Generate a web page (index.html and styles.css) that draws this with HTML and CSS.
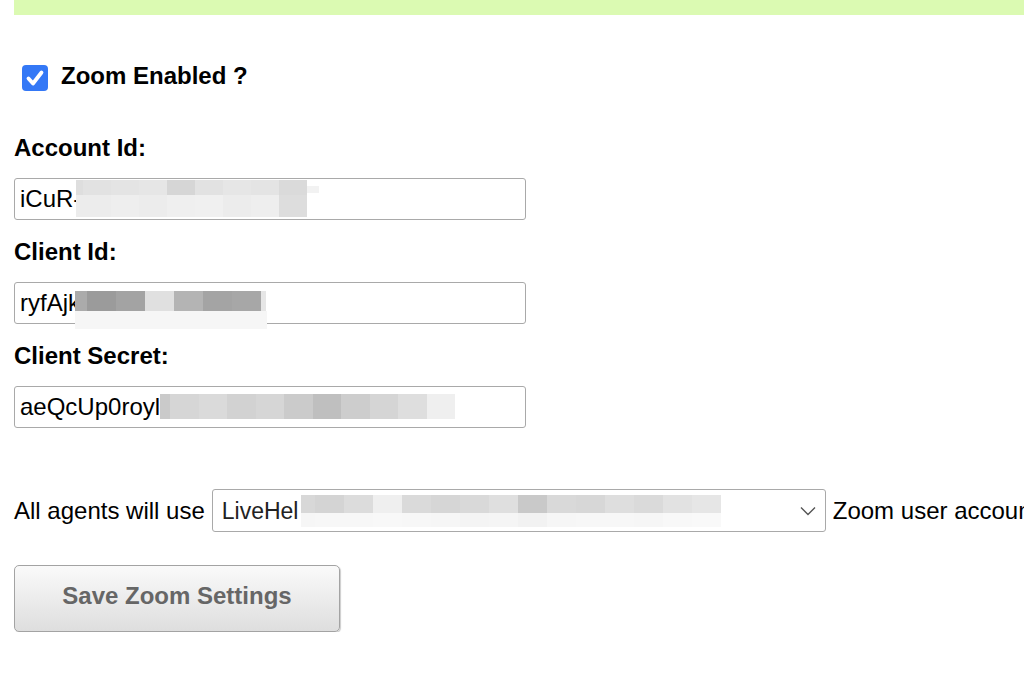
FILE: index.html
```html
<!DOCTYPE html>
<html>
<head>
<meta charset="utf-8">
<link rel="stylesheet" href="styles.css">
</head>
<body>
<div class="page">
  <div class="notice"></div>

  <label class="enable">
    <span class="check">
      <svg width="26" height="26" viewBox="0 0 26 26"><path d="M6.5 13.5 L11 18.5 L19.5 7.5" fill="none" stroke="#fff" stroke-width="3.8" stroke-linecap="round" stroke-linejoin="round"/></svg>
    </span>
    <span class="enable-text">Zoom Enabled ?</span>
  </label>

  <div class="field">
    <div class="label">Account Id:</div>
    <div class="input-wrap">
      <div class="input">iCuR-</div>
      <div class="blur blur-account">
        <div class="brow"><i style="width:7px;background:#dedede"></i><i style="background:#e2e2e2"></i><i style="background:#e4e4e4"></i><i style="background:#e6e6e6"></i><i style="background:#d6d6d6"></i><i style="background:#e2e2e2"></i><i style="background:#e6e6e6"></i><i style="background:#e4e4e4"></i><i style="background:#dadada"></i><i style="width:12px;height:7px;margin-top:6px;background:#f2f2f2"></i></div>
        <div class="brow"><i style="width:7px;background:#ececec"></i><i style="background:#ececec"></i><i style="background:#eeeeee"></i><i style="background:#ececec"></i><i style="background:#efefef"></i><i style="background:#f0f0f0"></i><i style="background:#ececec"></i><i style="background:#eeeeee"></i><i style="background:#dddddd"></i></div>
      </div>
    </div>
  </div>

  <div class="field">
    <div class="label">Client Id:</div>
    <div class="input-wrap">
      <div class="input">ryfAjk</div>
      <div class="blur blur-client">
        <div class="brow top"><i style="width:12px;background:#ababab"></i><i style="background:#9b9b9b"></i><i style="background:#a3a3a3"></i><i style="background:#e0e0e0"></i><i style="background:#b4b4b4"></i><i style="background:#a4a4a4"></i><i style="background:#a7a7a7"></i><i style="width:5px;background:#e6e6e6"></i></div>
        <div class="brow"><i style="width:192px;background:#f6f6f6"></i></div>
      </div>
    </div>
  </div>

  <div class="field">
    <div class="label">Client Secret:</div>
    <div class="input-wrap">
      <div class="input">aeQcUp0royl</div>
      <div class="blur blur-secret">
        <div class="brow"><i style="width:10px;background:#cacaca"></i><i style="background:#d6d6d6"></i><i style="background:#dadada"></i><i style="background:#d2d2d2"></i><i style="background:#d6d6d6"></i><i style="background:#cbcbcb"></i><i style="background:#bfbfbf"></i><i style="background:#cdcdcd"></i><i style="background:#d5d5d5"></i><i style="background:#dedede"></i><i style="background:#efefef"></i></div>
      </div>
    </div>
  </div>

  <div class="agents">
    <span>All agents will use</span>
    <div class="select-wrap">
      <div class="select">
        <span class="select-text">LiveHel</span>
        <svg class="chev" width="16" height="10" viewBox="0 0 16 10"><path d="M1 1.5 L8 8.5 L15 1.5" fill="none" stroke="#555" stroke-width="1.4"/></svg>
      </div>
      <div class="blur blur-select">
        <div class="brow top"><i style="width:14px;background:#d8d8d8"></i><i style="background:#d4d4d4"></i><i style="background:#dcdcdc"></i><i style="background:#efefef"></i><i style="background:#dadada"></i><i style="background:#d6d6d6"></i><i style="background:#d9d9d9"></i><i style="background:#dfdfdf"></i><i style="background:#c9c9c9"></i><i style="background:#d9d9d9"></i><i style="background:#d7d7d7"></i><i style="background:#dedede"></i><i style="background:#dadada"></i><i style="background:#e2e2e2"></i><i style="background:#e6e6e6"></i></div>
        <div class="brow"><i style="width:14px;background:#f6f6f6"></i><i style="background:#f7f7f7"></i><i style="background:#f7f7f7"></i><i style="background:#f8f8f8"></i><i style="background:#f7f7f7"></i><i style="background:#f6f6f6"></i><i style="background:#f4f4f4"></i><i style="background:#f5f5f5"></i><i style="background:#f2f2f2"></i><i style="background:#f6f6f6"></i><i style="background:#f7f7f7"></i><i style="background:#f7f7f7"></i><i style="background:#f6f6f6"></i><i style="background:#f8f8f8"></i><i style="background:#f9f9f9"></i></div>
      </div>
    </div>
    <span class="after">Zoom user account</span>
  </div>

  <button class="save">Save Zoom Settings</button>
</div>
</body>
</html>
```

FILE: styles.css
```css
html, body {
  margin: 0;
  padding: 0;
  background: #fff;
  overflow: hidden;
}
body {
  font-family: "Liberation Sans", Arial, sans-serif;
  font-size: 24px;
  color: #000;
}
.page {
  padding-left: 14px;
  width: 1010px;
}
.notice {
  height: 15px;
  background: #dbfab2;
}
.enable {
  display: flex;
  align-items: center;
  margin-top: 50px;
  height: 26px;
}
.check {
  width: 26px;
  height: 26px;
  margin-left: 8px;
  border-radius: 4px;
  background: #3478f6;
  display: flex;
}
.enable-text {
  margin-left: 13px;
  font-weight: bold;
  line-height: 28px;
  position: relative;
  top: -2px;
}
.field {
  display: flex;
  flex-direction: column;
}
.label {
  font-weight: bold;
  line-height: 28px;
  margin-top: 18px;
  margin-bottom: 16px;
}
.enable + .field .label {
  margin-top: 43px;
}
.input-wrap, .select-wrap {
  position: relative;
}
.input {
  box-sizing: border-box;
  width: 512px;
  height: 42px;
  border: 1px solid #a9a9a9;
  border-radius: 3px;
  padding: 0 5px;
  display: flex;
  align-items: center;
  line-height: 28px;
}
.blur {
  position: absolute;
  display: flex;
  flex-direction: column;
}
.brow {
  display: flex;
  align-items: flex-start;
}
.brow i {
  display: block;
  width: 28px;
  height: 100%;
}
.blur-account {
  left: 62px;
  top: 2px;
}
.blur-account .brow:first-child { height: 15px; }
.blur-account .brow:last-child { height: 22px; }
.blur-client {
  left: 61px;
  top: 9px;
}
.blur-client .brow i { width: 29px; }
.blur-client .brow.top { height: 20px; }
.blur-client .brow:last-child { height: 18px; }
.blur-secret {
  left: 146px;
  top: 8px;
}
.blur-secret .brow { height: 25px; }
.blur-secret .brow i { width: 28.5px; }
.blur-select {
  left: 96px;
  top: 6px;
}
.blur-select .brow i { width: 29px; }
.blur-select .brow.top { height: 18px; }
.blur-select .brow:last-child { height: 14px; }
.agents {
  display: flex;
  align-items: center;
  margin-top: 61px;
  white-space: nowrap;
  line-height: 28px;
}
.select {
  box-sizing: border-box;
  width: 614px;
  height: 43px;
  margin: 0 7px 0 7px;
  border: 1px solid #a9a9a9;
  border-radius: 3px;
  padding: 0 8px 0 9px;
  display: flex;
  align-items: center;
  justify-content: space-between;
  font-size: 23px;
  color: #222;
}
.chev {
  margin-right: 1px;
}
.save {
  display: block;
  margin-top: 33px;
  width: 326px;
  height: 67px;
  font-family: "Liberation Sans", Arial, sans-serif;
  font-size: 24px;
  font-weight: bold;
  color: #666;
  background: linear-gradient(#fafafa, #dedede);
  border: 1px solid #a3a3a3;
  border-radius: 5px;
  box-shadow: 1px 1px 1px rgba(0,0,0,0.2);
  padding: 0 0 5px 0;
}
```
